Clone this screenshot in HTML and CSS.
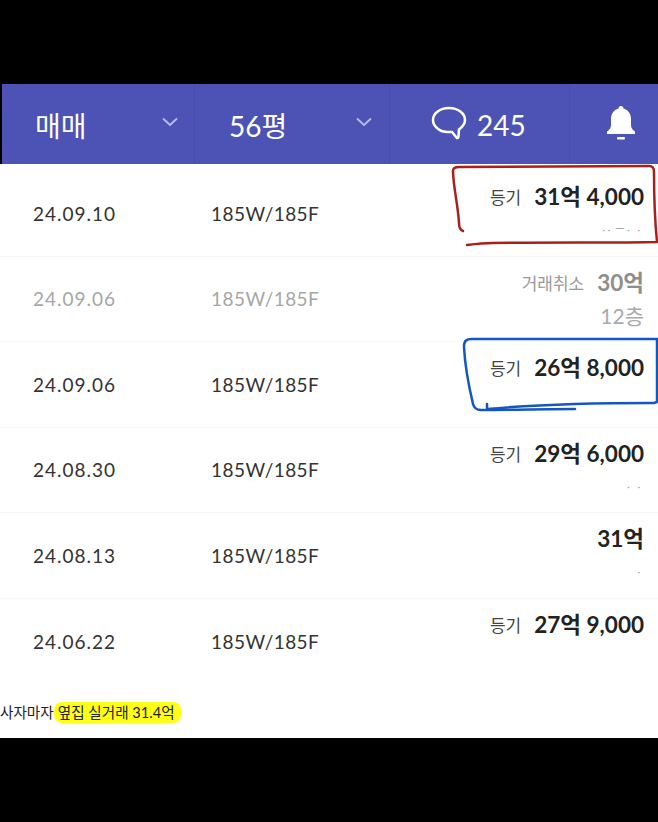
FILE: index.html
```html
<!DOCTYPE html>
<html lang="ko">
<head>
    <meta charset="UTF-8">
    <meta name="viewport" content="width=device-width, initial-scale=1.0">
    <title>실거래 내역</title>
    <link rel="stylesheet" href="styles.css">
</head>
<body>
    <div class="screen">
        <nav class="tabs">
            <div class="tab tab-type">
                <span>매매</span>
                <svg class="chevron" width="18" height="10" viewBox="0 0 18 10"><path d="M2 1.500l7 6.500 7-6.500"/></svg>
            </div>
            <div class="tab tab-size">
                <span>56평</span>
                <svg class="chevron" width="18" height="10" viewBox="0 0 18 10"><path d="M2 1.500l7 6.500 7-6.500"/></svg>
            </div>
            <div class="tab tab-comment">
                <svg class="bubble" width="36" height="34" viewBox="0 0 36 34"><path d="M18 2C9 2 2 7.500 2 14s7 12 15 12h4l4.500 5.500c1 1 2 .5 2-1l.5-7C32 20.500 34 17.500 34 14 34 7.500 27 2 18 2z"/></svg>
                <span>245</span>
            </div>
            <div class="tab tab-bell">
                <svg width="32" height="36" viewBox="0 0 32 36"><path d="M16 1c-1.500 0-2.500 1-2.500 2.500C8.500 5 6 9 6 14v6c0 3-1.500 5-4 6.500V29h28v-2.500c-2.500-1.500-4-3.500-4-6.500v-6c0-5-2.500-9-7.500-10.500C18.500 2 17.500 1 16 1z"/><rect x="12" y="32" width="8" height="2.500" rx="1"/></svg>
            </div>
        </nav>

        <div class="deals">
            <div class="deal">
                <div class="date">24.09.10</div>
                <div class="plan">185W/185F</div>
                <div class="result">
                    <div class="price-line"><span class="tag">등기</span><span class="price">31억 4,000</span></div>
                    <div class="sub specks">· · &nbsp;ㅡ · &nbsp;&nbsp;·</div>
                </div>
            </div>
            <div class="deal cancelled">
                <div class="date">24.09.06</div>
                <div class="plan">185W/185F</div>
                <div class="result">
                    <div class="price-line"><span class="tag">거래취소</span><span class="price">30억</span></div>
                    <div class="sub">12층</div>
                </div>
            </div>
            <div class="deal">
                <div class="date">24.09.06</div>
                <div class="plan">185W/185F</div>
                <div class="result">
                    <div class="price-line"><span class="tag">등기</span><span class="price">26억 8,000</span></div>
                    <div class="sub"></div>
                </div>
            </div>
            <div class="deal">
                <div class="date">24.08.30</div>
                <div class="plan">185W/185F</div>
                <div class="result">
                    <div class="price-line"><span class="tag">등기</span><span class="price">29억 6,000</span></div>
                    <div class="sub specks">· &nbsp;&nbsp;·</div>
                </div>
            </div>
            <div class="deal">
                <div class="date">24.08.13</div>
                <div class="plan">185W/185F</div>
                <div class="result">
                    <div class="price-line"><span class="price">31억</span></div>
                    <div class="sub specks">·</div>
                </div>
            </div>
            <div class="deal">
                <div class="date">24.06.22</div>
                <div class="plan">185W/185F</div>
                <div class="result">
                    <div class="price-line"><span class="tag">등기</span><span class="price">27억 9,000</span></div>
                    <div class="sub"></div>
                </div>
            </div>
        </div>

        <p class="caption">사자마자<mark>옆집 실거래 31.4억</mark></p>

        <!-- pen marks drawn over the screenshot -->
        <svg class="marks" width="658" height="822" viewBox="0 0 658 822">
            <path class="red" d="M463 231c-3-1-4-4-4-8-1-18-6-38-6-52 0-3 2-4 6-4l190-1c4 0 5 2 5 6 0 25 1 50 3 70-40 1-110 0-165 1-8 0-17 1-25 2"/>
            <path class="blue" d="M657 339H472c-6 0-8 2-8 8 1 20 5 40 9 57 1 4 3 6 8 6 32 0 64-1 94-1"/>
            <path class="blue" d="M657 339v62c0 1-2 2-5 2-60 0-110 1-165 6M487 404v4"/>
        </svg>
    </div>
</body>
</html>
```

FILE: styles.css
```css
* {
    margin: 0;
    padding: 0;
    box-sizing: border-box;
}

body {
    background-color: #000;
    font-family: Lato, "Noto Sans CJK KR", sans-serif;
}

.screen {
    position: relative;
    width: 658px;
    height: 822px;
    padding: 84px 0;
}

/* Top bar */
.tabs {
    display: flex;
    height: 80px;
    margin-left: 2px;
    background-color: #4c53b5;
    color: #fff;
    font-size: 28px;
}

.tab {
    display: flex;
    align-items: center;
    padding-top: 2px;
    border-right: 1px solid #474eae;
}

.tab-type {
    width: 193px;
    padding-left: 33px;
    padding-right: 15px;
    justify-content: space-between;
}

.tab-size {
    width: 195px;
    padding-left: 34px;
    padding-right: 16px;
    justify-content: space-between;
}

.tab-comment {
    width: 180px;
    padding-left: 41px;
    gap: 10px;
}

.tab-bell {
    flex: 1;
    justify-content: center;
    border-right: none;
}

.tab-bell svg {
    margin-left: 14px;
    margin-bottom: 4px;
    fill: #fff;
}

.chevron {
    margin-bottom: 6px;
    fill: none;
    stroke: #b9bdf0;
    stroke-width: 1.800;
}

.bubble {
    margin-bottom: 4px;
    fill: none;
    stroke: #fff;
    stroke-width: 2.500;
}

/* Deal rows */
.deals {
    height: 520px;
    padding-top: 7px;
    background-color: #fff;
}

.deal {
    display: flex;
    align-items: center;
    height: 85.500px;
    padding: 0 14px 0 33px;
    border-bottom: 1px solid #f8f8f8;
    color: #333;
    font-size: 19px;
}

.deal:last-child {
    border-bottom: none;
}

.date {
    width: 178px;
    letter-spacing: 1px;
}

.plan {
    width: 200px;
    letter-spacing: .45px;
}

.result {
    flex: 1;
    text-align: right;
}

.price-line, .sub {
    height: 33px;
    line-height: 33px;
}

.tag {
    margin-right: 13px;
    font-size: 17px;
    color: #444;
    vertical-align: 1px;
}

.price {
    font-size: 22.500px;
    font-weight: 700;
    color: #222;
}

.sub {
    font-size: 21px;
    color: #aaa;
}

.specks {
    padding-right: 4px;
    font-size: 10px;
    color: #999;
}

.cancelled .date, .cancelled .plan {
    color: #a6a6a6;
}

.cancelled .tag {
    color: #999;
}

.cancelled .price {
    color: #8e8e8e;
}

/* Caption under the screenshot */
.caption {
    height: 54px;
    padding-top: 19px;
    background-color: #fff;
    color: #222;
    font-size: 14.600px;
    line-height: 20px;
}

.caption mark {
    padding: 2px 6px 2px 4px;
    border-radius: 8px;
    background-color: #ffff1a;
    color: #222;
}

/* Pen marks */
.marks {
    position: absolute;
    top: 0;
    left: 0;
    fill: none;
    stroke-width: 2.500;
    stroke-linecap: round;
    stroke-linejoin: round;
}

.red {
    stroke: #a8201c;
}

.blue {
    stroke: #1557c0;
}
```
